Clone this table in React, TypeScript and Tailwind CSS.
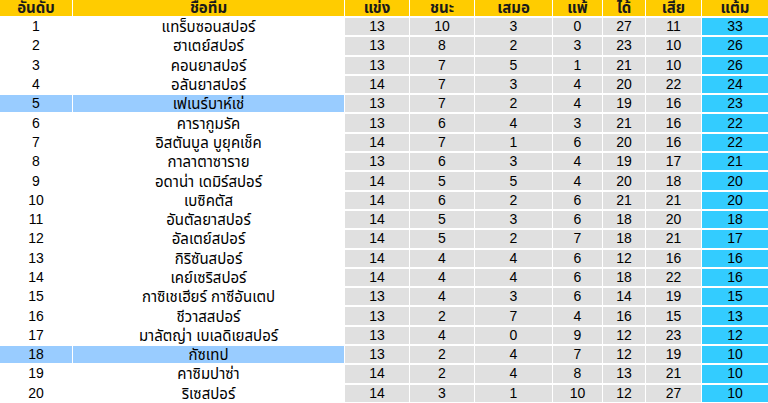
const rows: [number, string, number, number, number, number, number, number, number][] = [
  [1, "แทร็บซอนสปอร์", 13, 10, 3, 0, 27, 11, 33],
  [2, "ฮาเตย์สปอร์", 13, 8, 2, 3, 23, 10, 26],
  [3, "คอนยาสปอร์", 13, 7, 5, 1, 21, 10, 26],
  [4, "อลันยาสปอร์", 14, 7, 3, 4, 20, 22, 24],
  [5, "เฟเนร์บาห์เช่", 13, 7, 2, 4, 19, 16, 23],
  [6, "คารากูมรัค", 13, 6, 4, 3, 21, 16, 22],
  [7, "อิสตันบูล บูยุคเช็ค", 14, 7, 1, 6, 20, 16, 22],
  [8, "กาลาตาซาราย", 13, 6, 3, 4, 19, 17, 21],
  [9, "อดาน่า เดมิร์สปอร์", 14, 5, 5, 4, 20, 18, 20],
  [10, "เบซิคตัส", 14, 6, 2, 6, 21, 21, 20],
  [11, "อันตัลยาสปอร์", 14, 5, 3, 6, 18, 20, 18],
  [12, "อัลเตย์สปอร์", 14, 5, 2, 7, 18, 21, 17],
  [13, "กิริซันสปอร์", 14, 4, 4, 6, 12, 16, 16],
  [14, "เคย์เซริสปอร์", 14, 4, 4, 6, 18, 22, 16],
  [15, "กาซิเชเฮียร์ กาซีอันเตป", 13, 4, 3, 6, 14, 19, 15],
  [16, "ชีวาสสปอร์", 13, 2, 7, 4, 16, 15, 13],
  [17, "มาลัตญ่า เบเลดิเยสปอร์", 13, 4, 0, 9, 12, 23, 12],
  [18, "กัซเทป", 13, 2, 4, 7, 12, 19, 10],
  [19, "คาซิมปาซ่า", 14, 2, 4, 8, 13, 21, 10],
  [20, "ริเซสปอร์", 14, 3, 1, 10, 12, 27, 10],
];

const headers = ["อันดับ", "ชื่อทีม", "แข่ง", "ชนะ", "เสมอ", "แพ้", "ได้", "เสีย", "แต้ม"];
const cols = "grid grid-cols-[72px_271px_64px_64px_77px_49px_42px_55px_1fr] gap-x-px";

export default function App() {
  return (
    <div
      className="w-[768px] h-[403px] bg-white overflow-hidden flex flex-col gap-y-[2px] text-[14px] text-black"
      style={{ fontFamily: "'Liberation Sans', 'Noto Sans Thai', 'DejaVu Sans', sans-serif" }}
    >
      {/* Header */}
      <div className={`${cols} h-4 shrink-0`}>
        {headers.map((h) => (
          <div
            key={h}
            className="bg-[#ffcc00] flex items-center justify-center font-bold text-[15px] text-[#1a1a1a] leading-[16px]"
          >
            {h}
          </div>
        ))}
      </div>

      {rows.map((r) => {
        const hl = r[0] === 5 || r[0] === 18;
        return (
          <div key={r[0]} className={`${cols} h-[17.3px] shrink-0`}>
            <div className={`${hl ? "bg-[#99ccff]" : "bg-white"} flex items-center justify-center leading-[17px]`}>
              {r[0]}
            </div>
            <div className={`${hl ? "bg-[#99ccff]" : "bg-white"} flex items-center justify-center leading-[17px] text-[15px] whitespace-nowrap`}>
              {r[1]}
            </div>
            {r.slice(2, 8).map((v, i) => (
              <div key={i} className="bg-[#e0e0e0] flex items-center justify-center leading-[17px]">
                {v}
              </div>
            ))}
            <div className="bg-[#33ccff] flex items-center justify-center leading-[17px]">{r[8]}</div>
          </div>
        );
      })}
    </div>
  );
}
